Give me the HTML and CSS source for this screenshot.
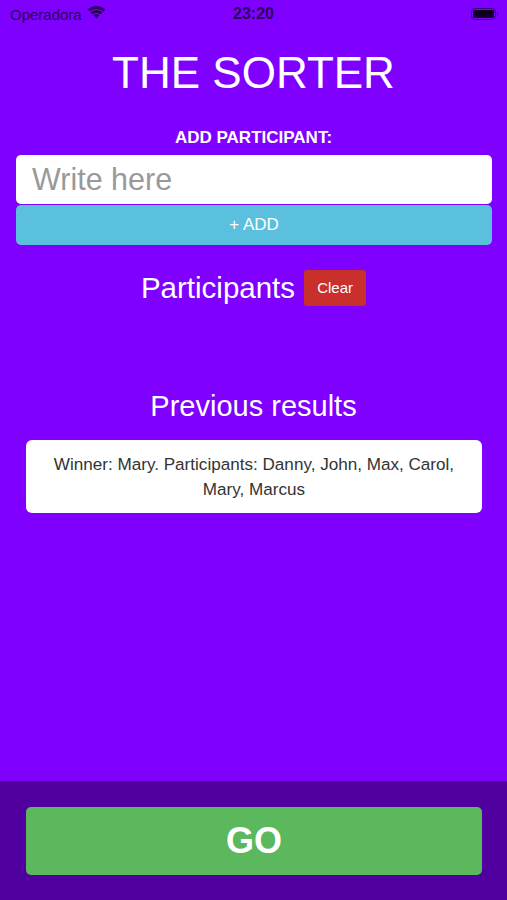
FILE: index.html
```html
<!DOCTYPE html>
<html lang="en">
<head>
<meta charset="utf-8">
<title>The Sorter</title>
<link rel="stylesheet" href="styles.css">
</head>
<body>
<div class="app">
  <div class="status">
    <div class="status-left"><span>Operadora</span>
      <svg class="wifi" width="19" height="14" viewBox="0 0 19 14"><path d="M9.500 3c2.600 0 4.900 1 6.700 2.700l2.100-2.200C16 1.200 12.900 0 9.500 0S3 1.200.7 3.500l2.100 2.200C4.600 4 6.900 3 9.500 3z"/><path d="M9.500 7c1.500 0 2.800.6 3.900 1.500l2-2.100C13.800 4.900 11.800 4 9.500 4S5.200 4.900 3.600 6.400l2 2.100C6.700 7.600 8 7 9.500 7z"/><path d="M9.500 8c-1.100 0-2.100.4-2.900 1.200l2.900 3.300 2.900-3.300C11.600 8.400 10.600 8 9.500 8z"/></svg>
    </div>
    <div class="status-time">23:20</div>
    <div class="status-right">
      <svg width="28" height="14" viewBox="0 0 28 14"><rect x="0.500" y="1.500" width="24" height="11" rx="3" fill="none" stroke="#3d0080" stroke-width="1"/><rect x="2" y="3" width="21" height="8" rx="1.600" fill="#0d0020"/><path d="M26 5v4c.8-.3 1.400-1.100 1.400-2s-.6-1.700-1.400-2z" fill="#3d0080"/></svg>
    </div>
  </div>
  <main class="content">
    <h1 class="title">THE SORTER</h1>
    <div class="add-label">ADD PARTICIPANT:</div>
    <div class="field">Write here</div>
    <div class="add-btn">+ ADD</div>
    <div class="participants">
      <span class="heading">Participants</span>
      <span class="clear">Clear</span>
    </div>
    <h2 class="heading results-title">Previous results</h2>
    <div class="result">Winner: Mary. Participants: Danny, John, Max, Carol, Mary, Marcus</div>
  </main>
  <footer class="footer">
    <div class="go">GO</div>
  </footer>
</div>
</body>
</html>
```
FILE: styles.css
```css
* { box-sizing: border-box; }
html, body { margin: 0; padding: 0; }
body { font-family: "Liberation Sans", Arial, sans-serif; color: #fff; background: #8000ff; }
.app { width: 507px; height: 900px; display: flex; flex-direction: column; background: #8000ff; overflow: hidden; }
.status { height: 28px; flex: none; display: grid; grid-template-columns: 1fr auto 1fr; align-items: center; padding: 0 10px; color: #2a0058; font-size: 15px; }
.status-left { display: flex; align-items: center; gap: 5px; }
.wifi { fill: #2a0058; margin-top: -3px; }
.status-time { font-size: 16px; font-weight: 700; color: #2a0058; }
.status-right { display: flex; justify-content: flex-end; margin-right: -2px; }
.content { flex: 1; display: flex; flex-direction: column; align-items: center; padding: 0 15px; }
.title { margin: 18px 0 0; font-size: 44px; line-height: 54px; font-weight: 400; }
.add-label { margin-top: 28px; font-size: 17px; line-height: 19px; font-weight: 700; }
.field { align-self: stretch; margin: 8px 0 0 1px; height: 49px; padding-left: 16px; background: #fff; border-radius: 5px; color: #999; font-size: 30.500px; line-height: 48px; }
.add-btn { align-self: stretch; margin: 1px 0 0 1px; height: 40px; background: #5bc0de; border-radius: 5px; font-size: 17px; line-height: 40px; text-align: center; }
.participants { margin-top: 25px; display: flex; align-items: center; gap: 9px; }
.heading { font-size: 29.500px; line-height: 36px; font-weight: 400; }
.clear { width: 62px; height: 36px; background: #c9302c; border-radius: 3px; font-size: 15px; line-height: 36px; text-align: center; }
.results-title { margin: 83px 0 0; font-size: 29px; line-height: 34px; }
.result { align-self: stretch; margin: 17px 10px 0 11px; padding: 13px 16px 0; height: 73px; background: #fff; border-radius: 6px; color: #333; font-size: 17.100px; line-height: 24.500px; text-align: center; }
.footer { flex: none; height: 119px; padding: 26px 25px 0 26px; background: #4f009e; }
.go { height: 68px; background: #5cb85c; border-radius: 5px; font-size: 36px; font-weight: 700; line-height: 68px; text-align: center; }
```
